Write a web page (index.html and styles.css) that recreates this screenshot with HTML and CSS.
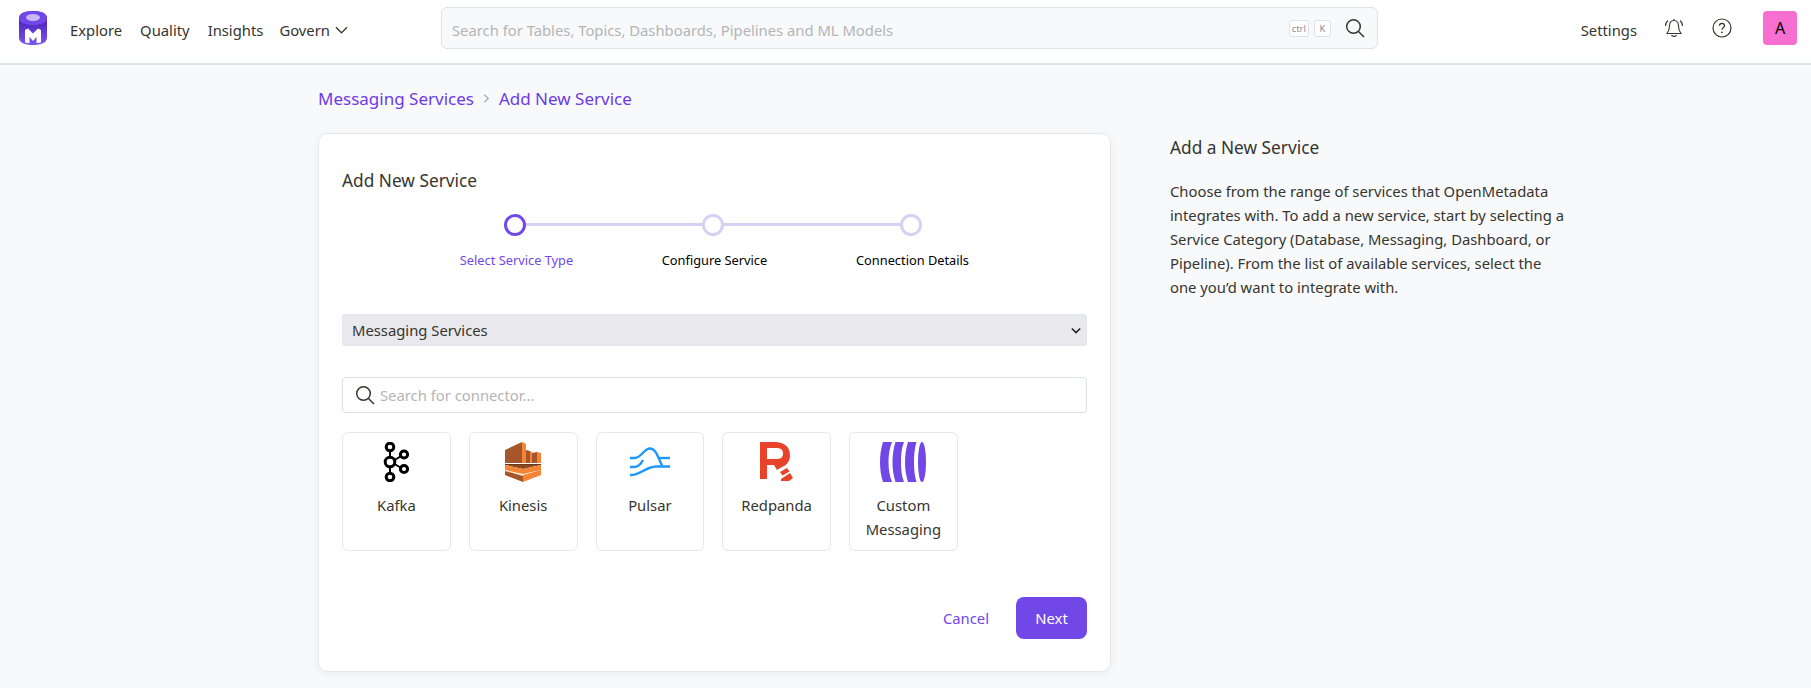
FILE: index.html
```html
<!DOCTYPE html>
<html lang="en">
<head>
    <meta charset="UTF-8">
    <meta name="viewport" content="width=device-width, initial-scale=1.0">
    <link rel="stylesheet" href="styles.css">
    <title>Add New Service</title>
</head>
<body>
    <header class="navbar">
        <svg class="logo" viewBox="0 0 28 34" width="28" height="34">
            <defs>
                <linearGradient id="logo-side" x1="0" y1="0" x2="0" y2="1">
                    <stop offset="0.3" stop-color="#4f28bf"/>
                    <stop offset="1" stop-color="#7a55ee"/>
                </linearGradient>
            </defs>
            <path d="M0 7C0 2.500 6 0 14 0s14 2.500 14 7v20c0 4.500-6 7-14 7S0 31.500 0 27z" fill="url(#logo-side)"/>
            <path d="M0 7C0 2.500 6 0 14 0s14 2.500 14 7-6 7-14 7S0 11.500 0 7z" fill="#7147e8"/>
            <ellipse cx="14" cy="6.500" rx="7" ry="3.500" fill="#c9b8f8"/>
            <path d="M6 31.500V19l3-1.500 5 5 5-5 3 1.500v12.500l-4.500.8V26L14 30l-3.500-4v6.300z" fill="#fff"/>
        </svg>
        <nav class="nav-links">
            <a>Explore</a>
            <a>Quality</a>
            <a>Insights</a>
            <a class="nav-drop">Govern
                <svg viewBox="0 0 14 8" width="13" height="8"><path d="M1 1l6 6 6-6" fill="none" stroke="#37352f" stroke-width="1.300"/></svg>
            </a>
        </nav>
        <div class="global-search">
            <span class="global-search-text">Search for Tables, Topics, Dashboards, Pipelines and ML Models</span>
            <span class="key">ctrl</span>
            <span class="key">K</span>
            <svg class="global-search-icon" viewBox="0 0 20 20" width="20" height="20"><circle cx="8.500" cy="8.500" r="6.800" fill="none" stroke="#37352f" stroke-width="1.500"/><path d="M13.500 13.500l5.500 5.500" stroke="#37352f" stroke-width="1.500"/></svg>
        </div>
        <div class="nav-right">
            <a class="nav-settings">Settings</a>
            <svg class="nav-icon-bell" viewBox="0 0 20 20" width="20" height="20">
                <path d="M10 2.500c-3 0-4.500 2.300-4.500 5.500 0 3.500-1 5.500-2.500 7.500h14c-1.500-2-2.500-4-2.500-7.500 0-3.200-1.500-5.500-4.500-5.500z" fill="none" stroke="#37352f" stroke-width="1.100"/>
                <path d="M7.500 17c.5 1.800 4.500 1.800 5 0M10 1v1.500M1.500 8c0-2.500.8-4 2.300-5.500M18.500 8c0-2.500-.8-4-2.300-5.500" fill="none" stroke="#37352f" stroke-width="1.100"/>
            </svg>
            <svg class="nav-icon-help" viewBox="0 0 20 20" width="20" height="20">
                <circle cx="10" cy="10" r="9" fill="none" stroke="#37352f" stroke-width="1.200"/>
                <path d="M7.500 7.800c0-3.200 5-3.200 5 0 0 2-2.500 2-2.500 4" fill="none" stroke="#37352f" stroke-width="1.300"/>
                <circle cx="10" cy="14.300" r=".9" fill="#37352f"/>
            </svg>
            <div class="avatar">A</div>
        </div>
    </header>

    <main class="page">
        <section class="page-left">
            <div class="breadcrumb">
                <a>Messaging Services</a>
                <svg viewBox="0 0 8 12" width="7" height="11"><path d="M1.500 1.500l4.500 4.500-4.500 4.500" fill="none" stroke="#9ca3af" stroke-width="1.300"/></svg>
                <a>Add New Service</a>
            </div>
            <div class="card">
                <h2 class="card-title">Add New Service</h2>

                <div class="stepper">
                    <div class="step step-active"><span class="dot"></span><span class="step-label">Select Service Type</span></div>
                    <div class="step"><span class="dot"></span><span class="step-label">Configure Service</span></div>
                    <div class="step"><span class="dot"></span><span class="step-label">Connection Details</span></div>
                </div>

                <div class="category-select">
                    <span>Messaging Services</span>
                    <svg viewBox="0 0 12 8" width="10" height="7"><path d="M1 1.500l5 5 5-5" fill="none" stroke="#222" stroke-width="1.800"/></svg>
                </div>

                <div class="connector-search">
                    <svg viewBox="0 0 20 20" width="20" height="20"><circle cx="8.500" cy="8.500" r="6.800" fill="none" stroke="#37352f" stroke-width="1.500"/><path d="M13.500 13.500l5.500 5.500" stroke="#37352f" stroke-width="1.500"/></svg>
                    <span>Search for connector...</span>
                </div>

                <div class="tiles">
                    <div class="tile">
                        <svg class="tile-icon" viewBox="0 0 26 40" width="26" height="40">
                            <g fill="none" stroke="#000" stroke-width="3">
                                <circle cx="7" cy="5" r="3.800"/>
                                <circle cx="7" cy="20" r="4.800"/>
                                <circle cx="7" cy="35" r="3.800"/>
                                <circle cx="21" cy="12.500" r="3.600"/>
                                <circle cx="21" cy="27" r="3.600"/>
                                <path d="M7 9v6M7 25v6" stroke-width="2"/>
                                <path d="M11.500 18l6-3.500M11.500 22l6 3.500" stroke-width="2"/>
                            </g>
                        </svg>
                        <span>Kafka</span>
                    </div>
                    <div class="tile">
                        <svg class="tile-icon" viewBox="0 0 36 40" width="36" height="40">
                            <path d="M0 8L17 0v21H0z" fill="#a5562a"/>
                            <path d="M17 0l4 2v19h-4z" fill="#f58534"/>
                            <path d="M21 8l4 1v12h-4z" fill="#a5562a"/>
                            <path d="M25 9l2 1v11h-2z" fill="#f58534"/>
                            <path d="M27 11l5-1v11h-5z" fill="#a5562a"/>
                            <path d="M32 10l4 1v10h-4z" fill="#f58534"/>
                            <path d="M0 22h36v1H0z" fill="#6b3a1e"/>
                            <path d="M0 23h36l-18 4z" fill="#8c4a22"/>
                            <path d="M0 23l18 4 18-4v5l-18 4-18-4z" fill="#f58534"/>
                            <path d="M0 28l18 5v1L0 29z" fill="#fbd2ae"/>
                            <path d="M0 29l18 5v6L0 33z" fill="#a5562a"/>
                            <path d="M36 28l-18 5v7l18-7z" fill="#f58534"/>
                        </svg>
                        <span>Kinesis</span>
                    </div>
                    <div class="tile">
                        <svg class="tile-icon" viewBox="0 0 40 40" width="40" height="40">
                            <g fill="none" stroke="#1e98ff" stroke-width="2.400">
                                <path d="M0 16h5c6 0 9-9.500 15-9.500 6 0 8 9 12 17"/>
                                <path d="M28 16h12"/>
                                <path d="M0 25h4c4 0 7-3 9-7"/>
                                <path d="M0 33c9 1 15-8 26-8.500h14"/>
                            </g>
                        </svg>
                        <span>Pulsar</span>
                    </div>
                    <div class="tile">
                        <svg class="tile-icon tile-icon-r" viewBox="0 0 36 40" width="36" height="40">
                            <path fill-rule="evenodd" d="M0 0h15c9 0 15 5 15 13 0 6-3 10-8 12l-5 3-3-5h-7v14H0zM7 6v11h9c4 0 7-1 7-5.500S20 6 16 6z" fill="#e6432a"/>
                            <path d="M20 30l7-4 2.500 3.500-7 4zM21 37l9-6 3 5-4 3h-8z" fill="#e6432a"/>
                        </svg>
                        <span>Redpanda</span>
                    </div>
                    <div class="tile">
                        <svg class="tile-icon" viewBox="0 0 46 40" width="46" height="40">
                            <g fill="#7147e8">
                                <path d="M3 0h9C9.500 6 8.500 13 8.500 20s1 14 3.500 20H3C1 34 0 27 0 20S1 6 3 0z"/>
                                <path d="M15.500 0h8.500C21.500 6 21 13 21 20s.5 14 3 20h-8.500c-2-6-3-13-3-20s1-14 3-20z"/>
                                <path d="M28 0h8.500C34.500 6 34 13 34 20s.5 14 2.500 20H28c-2-6-3-13-3-20s1-14 3-20z"/>
                                <ellipse cx="42" cy="20" rx="4" ry="20"/>
                            </g>
                        </svg>
                        <span>Custom Messaging</span>
                    </div>
                </div>

                <div class="card-actions">
                    <a class="btn-cancel">Cancel</a>
                    <a class="btn-next">Next</a>
                </div>
            </div>
        </section>

        <aside class="help-panel">
            <h3>Add a New Service</h3>
            <p>Choose from the range of services that OpenMetadata integrates with. To add a new service, start by selecting a Service Category (Database, Messaging, Dashboard, or Pipeline). From the list of available services, select the one you’d want to integrate with.</p>
        </aside>
    </main>
</body>
</html>
```

FILE: styles.css
```css
* {
    box-sizing: border-box;
}

body {
    margin: 0;
    height: 688px;
    overflow: hidden;
    font-family: "Noto Sans", "Open Sans", sans-serif;
    font-size: 14.8px;
    color: #37352f;
    background: #f8f9fb;
}

.navbar {
    display: flex;
    align-items: center;
    height: 65px;
    padding: 0 14px 7px 19px;
    background: #fff;
    border-bottom: 2px solid #dde3ea;
}

.logo {
    margin-right: 23px;
}

.nav-links {
    display: flex;
    align-items: center;
    gap: 18px;
    width: 371px;
    padding-top: 3px;
}

.nav-drop {
    display: flex;
    align-items: center;
    gap: 5px;
    margin-left: -2px;
}

.global-search {
    display: flex;
    align-items: center;
    width: 937px;
    height: 42px;
    padding: 0 12px 0 10px;
    background: #f8f9fb;
    border: 1px solid #dde3ea;
    border-radius: 6px;
}

.global-search-text {
    flex: 1;
    padding-top: 3px;
    color: #b5b5b5;
}

.key {
    display: flex;
    align-items: center;
    justify-content: center;
    height: 17px;
    min-width: 17px;
    margin-right: 5px;
    padding: 0 2px;
    font-size: 9.500px;
    color: #8b8f97;
    background: #fff;
    border: 1px solid #dde3ea;
    border-radius: 3px;
}

.global-search-icon {
    margin-left: 9px;
}

.nav-right {
    display: flex;
    align-items: center;
    margin-left: auto;
}

.nav-settings {
    padding-top: 3px;
}

.nav-icon-bell {
    margin-left: 27px;
}

.nav-icon-help {
    margin-left: 28px;
}

.avatar {
    display: flex;
    align-items: center;
    justify-content: center;
    width: 34px;
    height: 34px;
    margin-left: 31px;
    font-size: 16px;
    color: #000;
    background: #f76fd1;
    border-radius: 4px;
}

.page {
    display: flex;
    gap: 59px;
    padding-left: 318px;
}

.page-left {
    width: 793px;
}

.breadcrumb {
    display: flex;
    align-items: center;
    gap: 9px;
    height: 24px;
    margin-top: 21px;
    font-size: 17px;
    color: #6d3be4;
}

.card {
    height: 539px;
    margin-top: 23px;
    padding: 35px 23px 0;
    background: #fff;
    border: 1px solid #e6e8ee;
    border-radius: 10px;
    box-shadow: 0 2px 10px rgba(0, 0, 0, 0.06);
}

.card-title {
    margin: 0;
    font-size: 17.3px;
    font-weight: 400;
    line-height: 24px;
}

.stepper {
    display: grid;
    grid-template-columns: repeat(3, 198px);
    justify-content: center;
    margin-top: 21px;
}

.step {
    position: relative;
    display: flex;
    flex-direction: column;
    align-items: center;
    font-size: 12.8px;
    color: #000;
}

.step + .step::before {
    content: "";
    position: absolute;
    top: 9px;
    left: calc(-50% - 2px);
    width: 100%;
    height: 3px;
    background: #d9cef3;
}

.dot {
    position: relative;
    z-index: 1;
    width: 22px;
    height: 22px;
    margin-right: 4px;
    background: #fff;
    border: 3px solid #d9cef3;
    border-radius: 50%;
}

.step-active .dot {
    border-color: #7147e8;
}

.step-label {
    margin-top: 15px;
    line-height: 18px;
}

.step-active .step-label {
    color: #7147e8;
}

.category-select {
    display: flex;
    align-items: center;
    justify-content: space-between;
    height: 32px;
    margin-top: 45px;
    padding: 0 5px 0 9px;
    background: #e8e8ed;
    border: 1px solid #e2e5ec;
    border-radius: 3px;
}

.connector-search {
    display: flex;
    align-items: center;
    gap: 5px;
    height: 36px;
    margin-top: 31px;
    padding: 0 12px;
    color: #b5b5b5;
    border: 1px solid #dcdfe5;
    border-radius: 4px;
}

.tiles {
    display: flex;
    gap: 18px;
    margin-top: 19px;
}

.tile {
    display: flex;
    flex-direction: column;
    align-items: center;
    width: 108.75px;
    height: 119px;
    padding: 9px 8px 0;
    line-height: 24px;
    text-align: center;
    border: 1px solid #e6e8ee;
    border-radius: 6px;
}

.tile-icon {
    flex: none;
    margin-bottom: 11px;
}

.tile-icon-r {
    margin-left: 3px;
}

.card-actions {
    display: flex;
    align-items: center;
    justify-content: flex-end;
    gap: 27px;
    margin-top: 46px;
}

.btn-cancel {
    color: #7147e8;
}

.btn-next {
    display: flex;
    align-items: center;
    justify-content: center;
    width: 71px;
    height: 42px;
    color: #fff;
    background: #7147e8;
    border-radius: 8px;
}

.help-panel {
    width: 400px;
    padding-top: 71px;
}

.help-panel h3 {
    margin: 0;
    font-size: 17.3px;
    font-weight: 400;
    line-height: 24px;
}

.help-panel p {
    margin: 19px 0 0;
    line-height: 24px;
}
```
